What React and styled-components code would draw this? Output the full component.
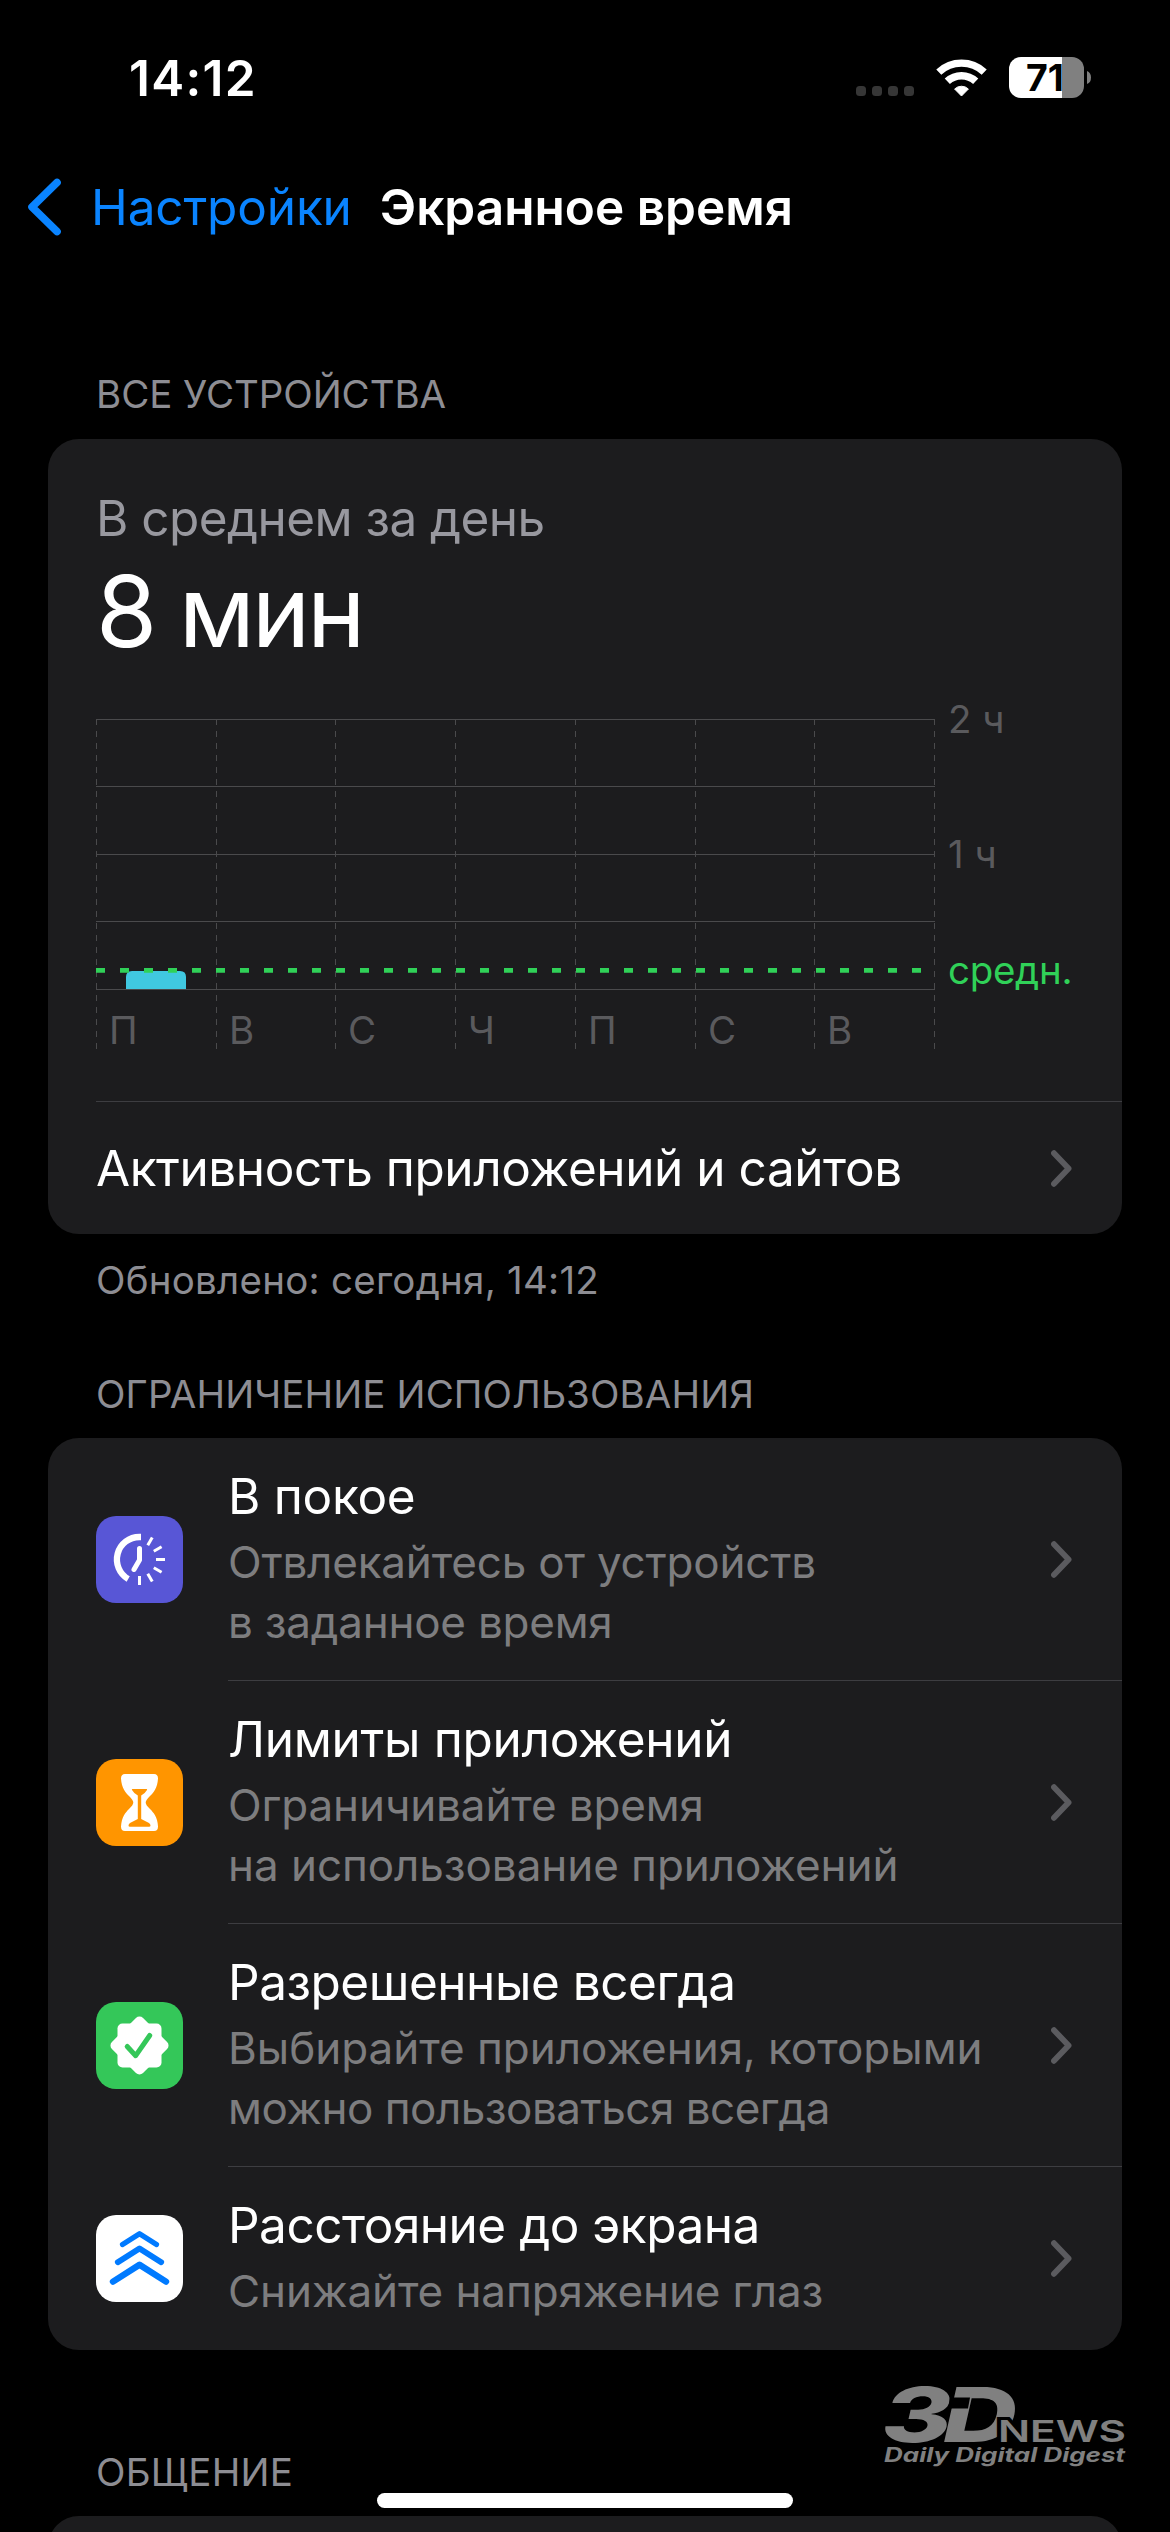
import React from 'react';
import styled, { createGlobalStyle } from 'styled-components';

const GlobalStyle = createGlobalStyle`
  body {
    margin: 0;
    background: #000;
    color: #fff;
    font-family: Inter, 'Liberation Sans', sans-serif;
  }
  svg {
    display: block;
    flex: none;
  }
`;

const Screen = styled.div`
  position: relative;
  display: flex;
  flex-direction: column;
  width: 1170px;
  height: 2532px;
  overflow: hidden;
  background: #000;
`;

const StatusBar = styled.header`
  display: flex;
  flex: none;
  align-items: center;
  justify-content: space-between;
  height: 155px;
  padding: 0 79px 0 129px;
`;

const Clock = styled.span`
  font-size: 49.5px;
  font-weight: 600;
  line-height: 60px;
  letter-spacing: 1.3px;
`;

const StatusIcons = styled.div`
  display: flex;
  align-items: center;
`;

const SignalDots = styled.div`
  display: flex;
  gap: 6px;
  margin: 27px 22px 0 0;
`;

const Dot = styled.span`
  width: 10px;
  height: 10px;
  border-radius: 3.5px;
  background: #363636;
`;

const Battery = styled.div`
  display: flex;
  align-items: center;
  width: 75px;
  height: 41px;
  box-sizing: border-box;
  margin: 0 3px 0 22px;
  padding-left: 17px;
  border-radius: 12px;
  background: linear-gradient(to right, #fff 53px, #808080 53px);
  color: #000;
  font-size: 37.5px;
  font-weight: 700;
  line-height: 41px;
`;

const NavBar = styled.nav`
  display: flex;
  flex: none;
  align-items: center;
  height: 103px;
  padding-left: 27px;
`;

const BackLabel = styled.span`
  margin: 0 28px 0 30px;
  color: #0a84ff;
  font-size: 49.5px;
  line-height: 60px;
  letter-spacing: -0.15px;
`;

const NavTitle = styled.h1`
  margin: 0;
  font-size: 49.5px;
  font-weight: 600;
  line-height: 60px;
  letter-spacing: 0;
`;

const SectionHeader = styled.h2`
  display: flex;
  flex: none;
  align-items: flex-end;
  box-sizing: border-box;
  height: ${(p) => p.$height}px;
  margin: 0;
  padding: 0 96px ${(p) => (p.$first ? 22 : 21)}px;
  color: #8d8d93;
  font-size: 38.5px;
  font-weight: 400;
  line-height: 46px;
  letter-spacing: ${(p) => p.$spacing || 0}px;
`;

const SectionFooter = styled.p`
  flex: none;
  margin: 23px 96px 0;
  color: #8d8d93;
  font-size: 38.5px;
  line-height: 46px;
  letter-spacing: 0.25px;
`;

const Card = styled.section`
  flex: none;
  margin: 0 48px;
  border-radius: 31px;
  background: #1c1c1e;
`;

const Summary = styled.div`
  padding: 49px 0 0 48px;
`;

const SummaryLabel = styled.div`
  color: #98989f;
  font-size: 49.5px;
  line-height: 60px;
  letter-spacing: -0.55px;
`;

const SummaryValue = styled.div`
  margin-top: 3px;
  margin-bottom: 19px;
  font-size: 99px;
  line-height: 120px;
  letter-spacing: -3.2px;
`;

const ChartText = styled.text`
  fill: ${(p) => p.$color || '#5a5a5d'};
  font-size: 38.5px;
  letter-spacing: ${(p) => p.$spacing || 0}px;
`;

const ActivityRow = styled.div`
  display: flex;
  align-items: center;
  justify-content: space-between;
  height: 132px;
  margin-left: 48px;
  padding-right: 50px;
  border-top: 1px solid #3d3d41;
  font-size: 49.5px;
  line-height: 60px;
  letter-spacing: -0.44px;
`;

const Row = styled.div`
  display: flex;
  align-items: center;
  gap: 45px;
  padding-left: 48px;
`;

const RowBody = styled.div`
  display: flex;
  flex: 1;
  align-items: center;
  justify-content: space-between;
  padding: 28px 50px 28px 0;
  border-bottom: 1px solid ${(p) => (p.$last ? 'transparent' : '#3d3d41')};
`;

const RowTitle = styled.div`
  margin-bottom: 6px;
  font-size: 49.5px;
  line-height: 60px;
  letter-spacing: ${(p) => p.$spacing || 0}px;
`;

const RowHint = styled.div`
  color: #7d7d7f;
  font-size: 44px;
  line-height: 60px;
  letter-spacing: ${(p) => p.$spacing || 0}px;
`;

const Tile = styled.div`
  width: 87px;
  height: 87px;
  border-radius: 20px;
  background: ${(p) => p.$color};
`;

const HomeIndicator = styled.div`
  position: absolute;
  bottom: 24px;
  left: 377px;
  width: 416px;
  height: 15px;
  border-radius: 8px;
  background: #fff;
`;

const Watermark = styled.svg`
  position: absolute;
  right: 44px;
  bottom: 61px;
  overflow: visible;
`;

const DAYS = ['П', 'В', 'С', 'Ч', 'П', 'С', 'В'];
const GRID_X = [0, 120, 239, 359, 479, 599, 718, 838];
const GRID_Y = [0, 67, 135, 202, 270];

function WifiIcon() {
  return (
    <svg width="51" height="38" viewBox="0 0 51 38" fill="none" stroke="#fff">
      <path d="M2.8 13.1A33.3 33.3 0 0 1 48.2 13.1" strokeWidth="7.4" />
      <path d="M11.3 22.3A20.8 20.8 0 0 1 39.7 22.3" strokeWidth="7.6" />
      <path d="M18.6 30A10 10 0 0 1 32.4 30L25.5 37Z" fill="#fff" strokeWidth="1" strokeLinejoin="round" />
    </svg>
  );
}

function Chevron() {
  return (
    <svg width="21" height="37" viewBox="0 0 21 37" fill="none">
      <path
        d="M3 3.2L17.6 18.5L3 33.8"
        stroke="#5b5b5f"
        strokeWidth="5.8"
        strokeLinecap="round"
        strokeLinejoin="round"
      />
    </svg>
  );
}

function BackChevron() {
  return (
    <svg width="34" height="58" viewBox="0 0 34 58" fill="none">
      <path
        d="M30 4.5L5 29L30 53.5"
        stroke="#0a84ff"
        strokeWidth="7.6"
        strokeLinecap="round"
        strokeLinejoin="round"
      />
    </svg>
  );
}

function UsageChart() {
  return (
    <svg width="1026" height="411" viewBox="0 0 1026 411">
      <g transform="translate(0 29)">
        {GRID_Y.map((y) => (
          <rect key={y} y={y} width="839" height="1" fill="#4a4a4c" />
        ))}
        {GRID_X.map((x) => (
          <line
            key={x}
            x1={x + 0.5}
            x2={x + 0.5}
            y1="0"
            y2="330"
            stroke="#4a4a4c"
            strokeDasharray="6 6"
          />
        ))}
        <path d="M30 270V258Q30 252 36 252H84Q90 252 90 258V270Z" fill="#40c8e0" />
        <line x1="0" x2="826" y1="251.4" y2="251.4" stroke="#30d158" strokeWidth="4.8" strokeDasharray="9 15" />
        {DAYS.map((day, i) => (
          <ChartText key={i} x={GRID_X[i] + 13} y="325">
            {day}
          </ChartText>
        ))}
        <ChartText x="852" y="14">2 ч</ChartText>
        <ChartText x="852" y="149">1 ч</ChartText>
        <ChartText x="852" y="265" $color="#30d158" $spacing={-0.3}>средн.</ChartText>
      </g>
    </svg>
  );
}

function DowntimeIcon() {
  return (
    <svg width="87" height="87" viewBox="0 0 87 87" fill="none" stroke="#fff">
      <path d="M45 21H43.5A22.5 22.5 0 0 0 32.2 63" strokeWidth="6.3" />
      <path d="M43.5 32.5V44L38 53.5" strokeWidth="5" strokeLinecap="round" strokeLinejoin="round" />
      {[30, 60, 90, 120, 150, 180].map((angle) => (
        <path key={angle} d="M43.5 18V27" strokeWidth="3" transform={`rotate(${angle} 43.5 43.5)`} />
      ))}
    </svg>
  );
}

function HourglassIcon() {
  return (
    <svg width="87" height="87" viewBox="0 0 87 87">
      <path
        fill="#fff"
        d="M29 15H58Q62 15 62 19.5C61.5 29 57.5 33.5 54 37Q49.7 41 49.7 43.5Q49.7 46 54 50C57.5 53.5 61.5 58 62 67.5Q62 72 58 72H29Q25 72 25 67.5C25.5 58 29.5 53.5 33 50Q37.3 46 37.3 43.5Q37.3 41 33 37C29.5 33.5 25.5 29 25 19.5Q25 15 29 15Z"
      />
      <path
        fill="#ff9500"
        d="M36.5 30H50.5Q51.5 30 51 31Q49 34.5 45.2 36.5V60L53 64Q54.5 65 54.5 66.5Q54.5 67.7 53 67.7H34Q32.5 67.7 32.5 66.5Q32.5 65 34 64L41.8 60V36.5Q38 34.5 36 31Q35.5 30 36.5 30Z"
      />
    </svg>
  );
}

function AllowedIcon() {
  return (
    <svg width="87" height="87" viewBox="0 0 87 87" fill="none">
      <rect x="21.5" y="21.5" width="44" height="44" rx="5" fill="#fff" />
      <rect x="21.5" y="21.5" width="44" height="44" rx="5" fill="#fff" transform="rotate(45 43.5 43.5)" />
      <path
        d="M31.2 44.5L39.7 53.7L53.7 33.5"
        stroke="#34c759"
        strokeWidth="5"
        strokeLinecap="round"
        strokeLinejoin="round"
      />
    </svg>
  );
}

function DistanceIcon() {
  return (
    <svg width="87" height="87" viewBox="0 0 87 87" fill="none" stroke="#007aff" strokeLinecap="round" strokeLinejoin="round">
      <path d="M26.5 29.5L43.5 18.7L60.5 29.5" strokeWidth="5.2" />
      <path d="M21.8 47.3L43.5 33.5L65.2 47.3" strokeWidth="5.8" />
      <path d="M17 66.6L43.5 49.8L70 66.6" strokeWidth="6.4" />
    </svg>
  );
}

// tracking is tuned per line, the hints are set slightly tighter or looser
const LIMITS = [
  {
    title: 'В покое',
    spacing: -0.28,
    hint: [
      ['Отвлекайтесь от устройств', -0.19],
      ['в заданное время', -0.23],
    ],
    color: '#5856d6',
    Icon: DowntimeIcon,
  },
  {
    title: 'Лимиты приложений',
    spacing: -0.3,
    hint: [
      ['Ограничивайте время', -0.12],
      ['на использование приложений', -0.06],
    ],
    color: '#ff9500',
    Icon: HourglassIcon,
  },
  {
    title: 'Разрешенные всегда',
    spacing: -0.47,
    hint: [
      ['Выбирайте приложения, которыми', -0.02],
      ['можно пользоваться всегда', -0.5],
    ],
    color: '#34c759',
    Icon: AllowedIcon,
  },
  {
    title: 'Расстояние до экрана',
    spacing: -0.5,
    hint: [['Снижайте напряжение глаз', -0.1]],
    color: '#fff',
    Icon: DistanceIcon,
  },
];

function NewsWatermark() {
  return (
    <Watermark width="242" height="86" viewBox="0 0 242 86" fill="#808080">
      <text x="-2" y="57" fontSize="75" fontWeight="800" fontStyle="italic" textLength="70" lengthAdjust="spacingAndGlyphs">
        3
      </text>
      <text x="59" y="57" fontSize="76" fontWeight="800" fontStyle="italic" textLength="74" lengthAdjust="spacingAndGlyphs">
        D
      </text>
      {/* gap in the stem of the D */}
      <path d="M66 12.500H86L84 23.500H64Z" fill="#000" />
      <text
        x="114"
        y="57"
        fontSize="30.5"
        fontWeight="600"
        textLength="128"
        lengthAdjust="spacingAndGlyphs"
        stroke="#000"
        strokeWidth="6"
        paintOrder="stroke"
      >
        NEWS
      </text>
      <text x="0" y="77" fontSize="20" fontWeight="700" fontStyle="italic" textLength="241" lengthAdjust="spacingAndGlyphs">
        Daily Digital Digest
      </text>
    </Watermark>
  );
}

export default function App() {
  return (
    <Screen>
      <GlobalStyle />
      <StatusBar>
        <Clock>14:12</Clock>
        <StatusIcons>
          <SignalDots>
            <Dot />
            <Dot />
            <Dot />
            <Dot />
          </SignalDots>
          <WifiIcon />
          <Battery>71</Battery>
          <svg width="4" height="13" viewBox="0 0 4 13">
            <path d="M0 0Q4 1.500 4 6.500Q4 11.500 0 13Z" fill="#808080" />
          </svg>
        </StatusIcons>
      </StatusBar>

      <NavBar>
        <BackChevron />
        <BackLabel>Настройки</BackLabel>
        <NavTitle>Экранное время</NavTitle>
      </NavBar>

      <SectionHeader $first $height={181} $spacing={-0.06}>ВСЕ УСТРОЙСТВА</SectionHeader>
      <Card>
        <Summary>
          <SummaryLabel>В среднем за день</SummaryLabel>
          <SummaryValue>8 мин</SummaryValue>
          <UsageChart />
        </Summary>
        <ActivityRow>
          Активность приложений и сайтов
          <Chevron />
        </ActivityRow>
      </Card>
      <SectionFooter>Обновлено: сегодня, 14:12</SectionFooter>

      <SectionHeader $height={135} $spacing={0.1}>ОГРАНИЧЕНИЕ ИСПОЛЬЗОВАНИЯ</SectionHeader>
      <Card>
        {LIMITS.map(({ title, spacing, hint, color, Icon }, i) => (
          <Row key={title}>
            <Tile $color={color}>
              <Icon />
            </Tile>
            <RowBody $last={i === LIMITS.length - 1}>
              <div>
                <RowTitle $spacing={spacing}>{title}</RowTitle>
                {hint.map(([line, tracking]) => (
                  <RowHint key={line} $spacing={tracking}>{line}</RowHint>
                ))}
              </div>
              <Chevron />
            </RowBody>
          </Row>
        ))}
      </Card>

      <SectionHeader $height={166} $spacing={0.2}>ОБЩЕНИЕ</SectionHeader>
      <Card>
        <Row>
          <RowBody $last>
            <RowTitle>&nbsp;</RowTitle>
          </RowBody>
        </Row>
      </Card>

      <NewsWatermark />
      <HomeIndicator />
    </Screen>
  );
}
